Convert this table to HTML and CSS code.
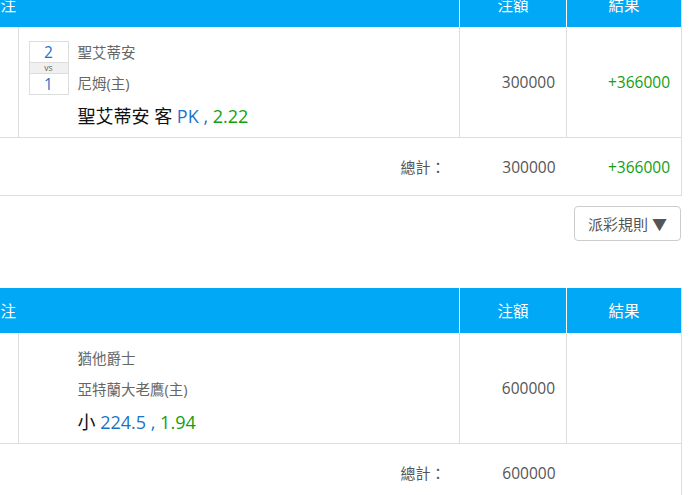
FILE: index.html
```html
<!DOCTYPE html>
<html>
<head>
    <title>注單明細</title>
    <link rel="stylesheet" href="styles.css">
</head>
<body>
    <div class="page">
        <table class="bet-table first">
            <colgroup>
                <col class="col-no">
                <col>
                <col class="col-amount">
                <col class="col-result">
            </colgroup>
            <tr>
                <th colspan="2" class="th-left">投注</th>
                <th>注額</th>
                <th>結果</th>
            </tr>
            <tr class="bet-row">
                <td class="no"></td>
                <td class="info-cell">
                    <div class="bet-info">
                        <div class="score">
                            <div class="score-num">2</div>
                            <div class="score-vs">vs</div>
                            <div class="score-num">1</div>
                        </div>
                        <div class="team">聖艾蒂安</div>
                        <div class="team">尼姆(主)</div>
                        <div class="pick">聖艾蒂安 客 <span class="blue">PK ,</span> <span class="green">2.22</span></div>
                    </div>
                </td>
                <td class="num">300000</td>
                <td class="num green">+366000</td>
            </tr>
            <tr class="total-row">
                <td colspan="2" class="total-label">總計：</td>
                <td class="num">300000</td>
                <td class="num green">+366000</td>
            </tr>
        </table>

        <div class="rules">
            <button class="rules-btn">派彩規則 ▼</button>
        </div>

        <table class="bet-table">
            <colgroup>
                <col class="col-no">
                <col>
                <col class="col-amount">
                <col class="col-result">
            </colgroup>
            <tr>
                <th colspan="2" class="th-left">投注</th>
                <th>注額</th>
                <th>結果</th>
            </tr>
            <tr class="bet-row">
                <td class="no"></td>
                <td class="info-cell">
                    <div class="bet-info">
                        <div class="team">猶他爵士</div>
                        <div class="team">亞特蘭大老鷹(主)</div>
                        <div class="pick">小 <span class="blue">224.5 ,</span> <span class="green">1.94</span></div>
                    </div>
                </td>
                <td class="num">600000</td>
                <td class="num"></td>
            </tr>
            <tr class="total-row">
                <td colspan="2" class="total-label">總計：</td>
                <td class="num">600000</td>
                <td class="num"></td>
            </tr>
        </table>
    </div>
</body>
</html>
```

FILE: styles.css
```css
body {
    margin: 0;
    font-family: "Open Sans", "Noto Sans CJK TC", sans-serif;
    color: #555;
    background: #fff;
    overflow: hidden;
}
.page {
    margin: -18px 12px 0 -20px;
}
.bet-table {
    width: 100%;
    border-collapse: collapse;
    table-layout: fixed;
    border-right: 1px solid #ddd;
}
.col-no {
    width: 38px;
}
.col-amount {
    width: 107px;
}
.col-result {
    width: 115px;
}
.bet-table th {
    height: 45px;
    padding: 0;
    background-color: #00a8f6;
    color: #fff;
    font-size: 15.5px;
    font-weight: normal;
    text-align: center;
    border-left: 1px solid #fff;
}
.bet-table th.th-left {
    text-align: left;
    padding-left: 5px;
    border-left: none;
}
.bet-row td {
    height: 110px;
    padding: 0;
    border-bottom: 1px solid #ddd;
    border-left: 1px solid #ddd;
    vertical-align: middle;
}
.bet-row td.no {
    border-left: none;
}
.bet-row td.info-cell {
    vertical-align: top;
}
.bet-info {
    display: grid;
    grid-template-columns: 40px 1fr;
    column-gap: 9px;
    padding: 10px 0 0 10px;
}
.score {
    grid-row: 1 / 3;
    align-self: center;
    border: 1px solid #ddd;
    text-align: center;
    color: #1a73c9;
    font-size: 15.5px;
}
.score-num {
    height: 20px;
    line-height: 20px;
}
.score-vs {
    height: 10px;
    line-height: 10px;
    font-size: 8.5px;
    color: #666;
    background-color: #f0f0f0;
    border-top: 1px solid #ddd;
    border-bottom: 1px solid #ddd;
    overflow: hidden;
}
.team {
    grid-column: 2;
    font-size: 14.5px;
    line-height: 31px;
    color: #666;
}
.pick {
    grid-column: 2;
    font-size: 18px;
    line-height: 34px;
    color: #111;
}
.blue {
    color: #1a73c9;
}
.green {
    color: #12a012;
}
.num {
    text-align: right;
    padding-right: 11px !important;
    font-size: 15.5px;
}
.total-row td {
    height: 57px;
    padding: 0;
    border-bottom: 1px solid #ddd;
    font-size: 15.5px;
}
.total-label {
    text-align: right;
    padding-right: 14px !important;
    font-size: 15px !important;
}
.rules {
    display: flex;
    justify-content: flex-end;
    margin-top: 10px;
    margin-bottom: 47px;
    padding-right: 1px;
}
.rules-btn {
    width: 107px;
    height: 35px;
    padding: 0;
    font-family: "Open Sans", "Noto Sans CJK TC", sans-serif;
    font-size: 15px;
    color: #555;
    background: #fff;
    border: 1px solid #ccc;
    border-radius: 4px;
}
```
